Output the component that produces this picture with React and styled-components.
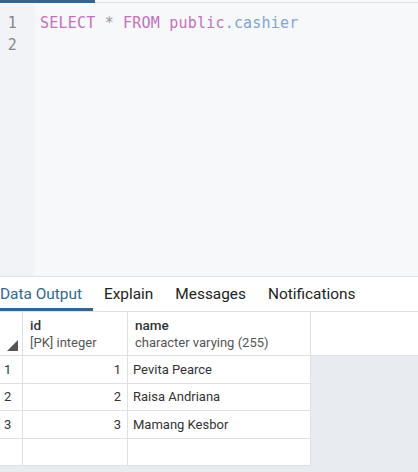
import React from 'react';
import styled, { createGlobalStyle } from 'styled-components';

const GlobalStyle = createGlobalStyle`
  html, body {
    margin: 0;
    padding: 0;
    background: #fff;
  }
  * {
    box-sizing: border-box;
  }
`;

const Page = styled.div`
  width: 418px;
  height: 472px;
  display: flex;
  flex-direction: column;
  overflow: hidden;
  font-family: Roboto, 'Liberation Sans', sans-serif;
  background: #fff;
`;

const TopStrip = styled.div`
  display: flex;
  height: 4px;
  background: #f7f8fa;
`;

const ActiveStrip = styled.div`
  width: 95px;
  height: 3px;
  background: #326690;
`;

const StripRest = styled.div`
  flex: 1;
  height: 3px;
  border-bottom: 1px solid #dde0e6;
`;

const Editor = styled.div`
  height: 273px;
  display: flex;
  background: #f7f8fa;
  border-bottom: 1px solid #dde0e6;
  font-family: 'DejaVu Sans Mono', 'Liberation Mono', monospace;
  font-size: 15px;
  letter-spacing: 0.2px;
  line-height: 22px;
`;

const Gutter = styled.div`
  width: 35px;
  background: #f1f3f6;
  color: #888;
  padding: 8px 18px 0 0;
  text-align: right;
`;

const Code = styled.div`
  flex: 1;
  padding: 8px 0 0 5px;
  white-space: pre;
`;

const Tok = styled.span`
  color: ${(p) => p.$c};
`;

const Tabs = styled.div`
  display: flex;
  height: 34px;
  margin-left: -11px;
`;

const Tab = styled.div`
  display: flex;
  align-items: center;
  padding: 3px 11px 0;
  font-size: 15.4px;
  color: ${(p) => (p.$active ? '#326690' : '#222')};
  border-bottom: 3px solid ${(p) => (p.$active ? '#326690' : 'transparent')};
`;

const Grid = styled.div`
  flex: 1;
  display: grid;
  grid-template-columns: 23px 105px 183px 1fr;
  grid-template-rows: 44px;
  grid-auto-rows: 27.6px;
  align-content: start;
  background: #e8ebf0;
  border-top: 1px solid #dde0e6;
  font-size: 13px;
  color: #222;
`;

const HeadCell = styled.div`
  position: relative;
  background: #fff;
  border-bottom: 1px solid #dde0e6;
  border-right: ${(p) => (p.$last ? 'none' : '1px solid #dde0e6')};
  padding: 5px 7px 0;
  display: flex;
  flex-direction: column;
`;

const ColName = styled.div`
  font-size: 13.5px;
  font-weight: 500;
  color: #333;
  line-height: 17px;
`;

const ColType = styled.div`
  font-size: 13px;
  color: #555;
  line-height: 17px;
`;

const SortMark = styled.svg`
  position: absolute;
  left: 7px;
  bottom: 4px;
`;

const Cell = styled.div`
  background: #fff;
  border-bottom: 1px solid #dde0e6;
  border-right: 1px solid #dde0e6;
  display: flex;
  align-items: center;
  padding: 0 ${(p) => (p.$num ? '6px' : '5px')};
  justify-content: ${(p) => (p.$num ? 'flex-end' : 'flex-start')};
  font-size: 13px;
  color: #333;
`;

const RowNum = styled(Cell)`
  padding: 0 4px;
`;

const Filler = styled.div``;

const rows = [
  { id: 1, name: 'Pevita Pearce' },
  { id: 2, name: 'Raisa Andriana' },
  { id: 3, name: 'Mamang Kesbor' },
];

export default function App() {
  return (
    <Page>
      <GlobalStyle />
      <TopStrip>
        <ActiveStrip />
        <StripRest />
      </TopStrip>
      <Editor>
        <Gutter>
          <div>1</div>
          <div>2</div>
        </Gutter>
        <Code>
          <div>
            <Tok $c="#c470c0">SELECT</Tok> <Tok $c="#999">*</Tok>{' '}
            <Tok $c="#c470c0">FROM</Tok> <Tok $c="#c470c0">public</Tok>
            <Tok $c="#7ea4d4">.cashier</Tok>
          </div>
          <div> </div>
        </Code>
      </Editor>
      <Tabs>
        <Tab $active>Data Output</Tab>
        <Tab>Explain</Tab>
        <Tab>Messages</Tab>
        <Tab>Notifications</Tab>
      </Tabs>
      <Grid>
        <HeadCell>
          <SortMark width="11" height="11" viewBox="0 0 11 11">
            <path d="M11 0 L11 11 L0 11 Z" fill="#555" />
          </SortMark>
        </HeadCell>
        <HeadCell>
          <ColName>id</ColName>
          <ColType>[PK] integer</ColType>
        </HeadCell>
        <HeadCell>
          <ColName>name</ColName>
          <ColType>character varying (255)</ColType>
        </HeadCell>
        <HeadCell $last />
        {rows.map((r, i) => (
          <React.Fragment key={r.id}>
            <RowNum>{i + 1}</RowNum>
            <Cell $num>{r.id}</Cell>
            <Cell>{r.name}</Cell>
            <Filler />
          </React.Fragment>
        ))}
        <RowNum />
        <Cell />
        <Cell />
        <Filler />
      </Grid>
    </Page>
  );
}
